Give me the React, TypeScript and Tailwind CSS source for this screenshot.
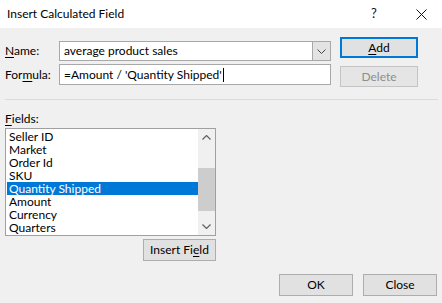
import React from "react";

const font = { fontFamily: 'Lato, "Noto Sans", sans-serif' };

function Btn({ children, className = "" }: { children: React.ReactNode; className?: string }) {
  return (
    <div className={"flex items-center justify-center text-[12px] leading-none " + className}>{children}</div>
  );
}

export default function App() {
  const items = ["Seller ID", "Market", "Order Id", "SKU", "Quantity Shipped", "Amount", "Currency", "Quarters"];
  return (
    <div className="w-[442px] h-[303px] bg-[#f0f0f0] text-[12px] text-black overflow-hidden" style={font}>
      {/* Title bar */}
      <div className="h-[28px] bg-white flex items-center">
        <div className="pl-[7px] flex-1 text-[12px]">Insert Calculated Field</div>
        <div className="w-[10px] text-[13px] mr-[35px] text-[#111]">?</div>
        <svg width="11" height="11" viewBox="0 0 11 11" className="mr-[15px]">
          <path d="M0.5 0.5 L10.5 10.5 M10.5 0.5 L0.5 10.5" stroke="#111" strokeWidth="1" />
        </svg>
      </div>

      {/* Top section */}
      <div className="flex pt-[9px]">
        <div className="flex flex-col pl-[5px] w-[331px]">
          <div className="flex items-center mt-[4px] h-[20px]">
            <div className="w-[54px]">
              <span className="underline underline-offset-2">N</span>ame:
            </div>
            <div className="flex h-[20px] w-[272px] border border-[#a8a8a8] bg-white">
              <div className="flex-1 flex items-center pl-[4px]">average product sales</div>
              <div className="w-[18px] bg-[#e3e3e3] border-l border-[#a8a8a8] flex items-center justify-center">
                <svg width="9" height="5" viewBox="0 0 9 5">
                  <path d="M0.5 0.5 L4.5 4.5 L8.5 0.5" stroke="#444" strokeWidth="1" fill="none" />
                </svg>
              </div>
            </div>
          </div>
          <div className="flex items-center mt-[3px] h-[21px]">
            <div className="w-[54px]">
              For<span className="underline underline-offset-2">m</span>ula:
            </div>
            <div className="flex items-center h-[21px] w-[272px] border border-[#a8a8a8] bg-white pl-[4px]">
              =Amount / 'Quantity Shipped'
              <span className="inline-block w-px h-[14px] bg-black ml-[1px]" />
            </div>
          </div>
        </div>
        <div className="flex flex-col ml-[9px]">
          <Btn className="w-[78px] h-[21px] bg-[#e1e1e1] border-2 border-[#0078d7] text-black">
            <span>
              <span className="underline underline-offset-2">A</span>dd
            </span>
          </Btn>
          <Btn className="w-[78px] h-[21px] mt-[8px] bg-[#e5e5e5] border border-[#c4c4c4] text-[#8d8d8d]">
            Delete
          </Btn>
        </div>
      </div>

      {/* Separator */}
      <div className="ml-[5px] mr-[4px] mt-[12px] h-px bg-[#dadada]" />

      {/* Fields */}
      <div className="pl-[5px] mt-[12px] leading-[14px]">
        <span className="underline underline-offset-2">F</span>ields:
      </div>
      <div className="ml-[5px] mt-[2px] w-[211px] h-[108px] border border-[#a0a0a0] bg-white flex">
        <div className="flex-1 pl-[1px] pt-[1px] flex flex-col">
          {items.map((it) => (
            <div
              key={it}
              className={
                "h-[13px] leading-[13px] pl-[2px] " +
                (it === "Quantity Shipped" ? "bg-[#0078d7] text-white" : "")
              }
            >
              {it}
            </div>
          ))}
        </div>
        <div className="w-[17px] bg-[#f0f0f0] flex flex-col">
          <div className="h-[17px] flex items-center justify-center">
            <svg width="9" height="5" viewBox="0 0 9 5">
              <path d="M0.5 4.5 L4.5 0.5 L8.5 4.5" stroke="#606060" strokeWidth="1.2" fill="none" />
            </svg>
          </div>
          <div className="h-[22px]" />
          <div className="h-[43px] bg-[#cdcdcd]" />
          <div className="flex-1" />
          <div className="h-[17px] flex items-center justify-center">
            <svg width="9" height="5" viewBox="0 0 9 5">
              <path d="M0.5 0.5 L4.5 4.5 L8.5 0.5" stroke="#606060" strokeWidth="1.2" fill="none" />
            </svg>
          </div>
        </div>
      </div>
      <div className="flex ml-[143px] mt-[3px]">
        <Btn className="w-[73px] h-[22px] bg-[#e1e1e1] border border-[#adadad] text-black">
          <span>
            Insert Fi<span className="underline underline-offset-2">e</span>ld
          </span>
        </Btn>
      </div>

      {/* Bottom buttons */}
      <div className="flex justify-end mt-[13px] pr-[5px] gap-[10px]">
        <Btn className="w-[74px] h-[22px] bg-[#e1e1e1] border border-[#adadad] text-black">OK</Btn>
        <Btn className="w-[74px] h-[22px] bg-[#e1e1e1] border border-[#adadad] text-black">Close</Btn>
      </div>
    </div>
  );
}
